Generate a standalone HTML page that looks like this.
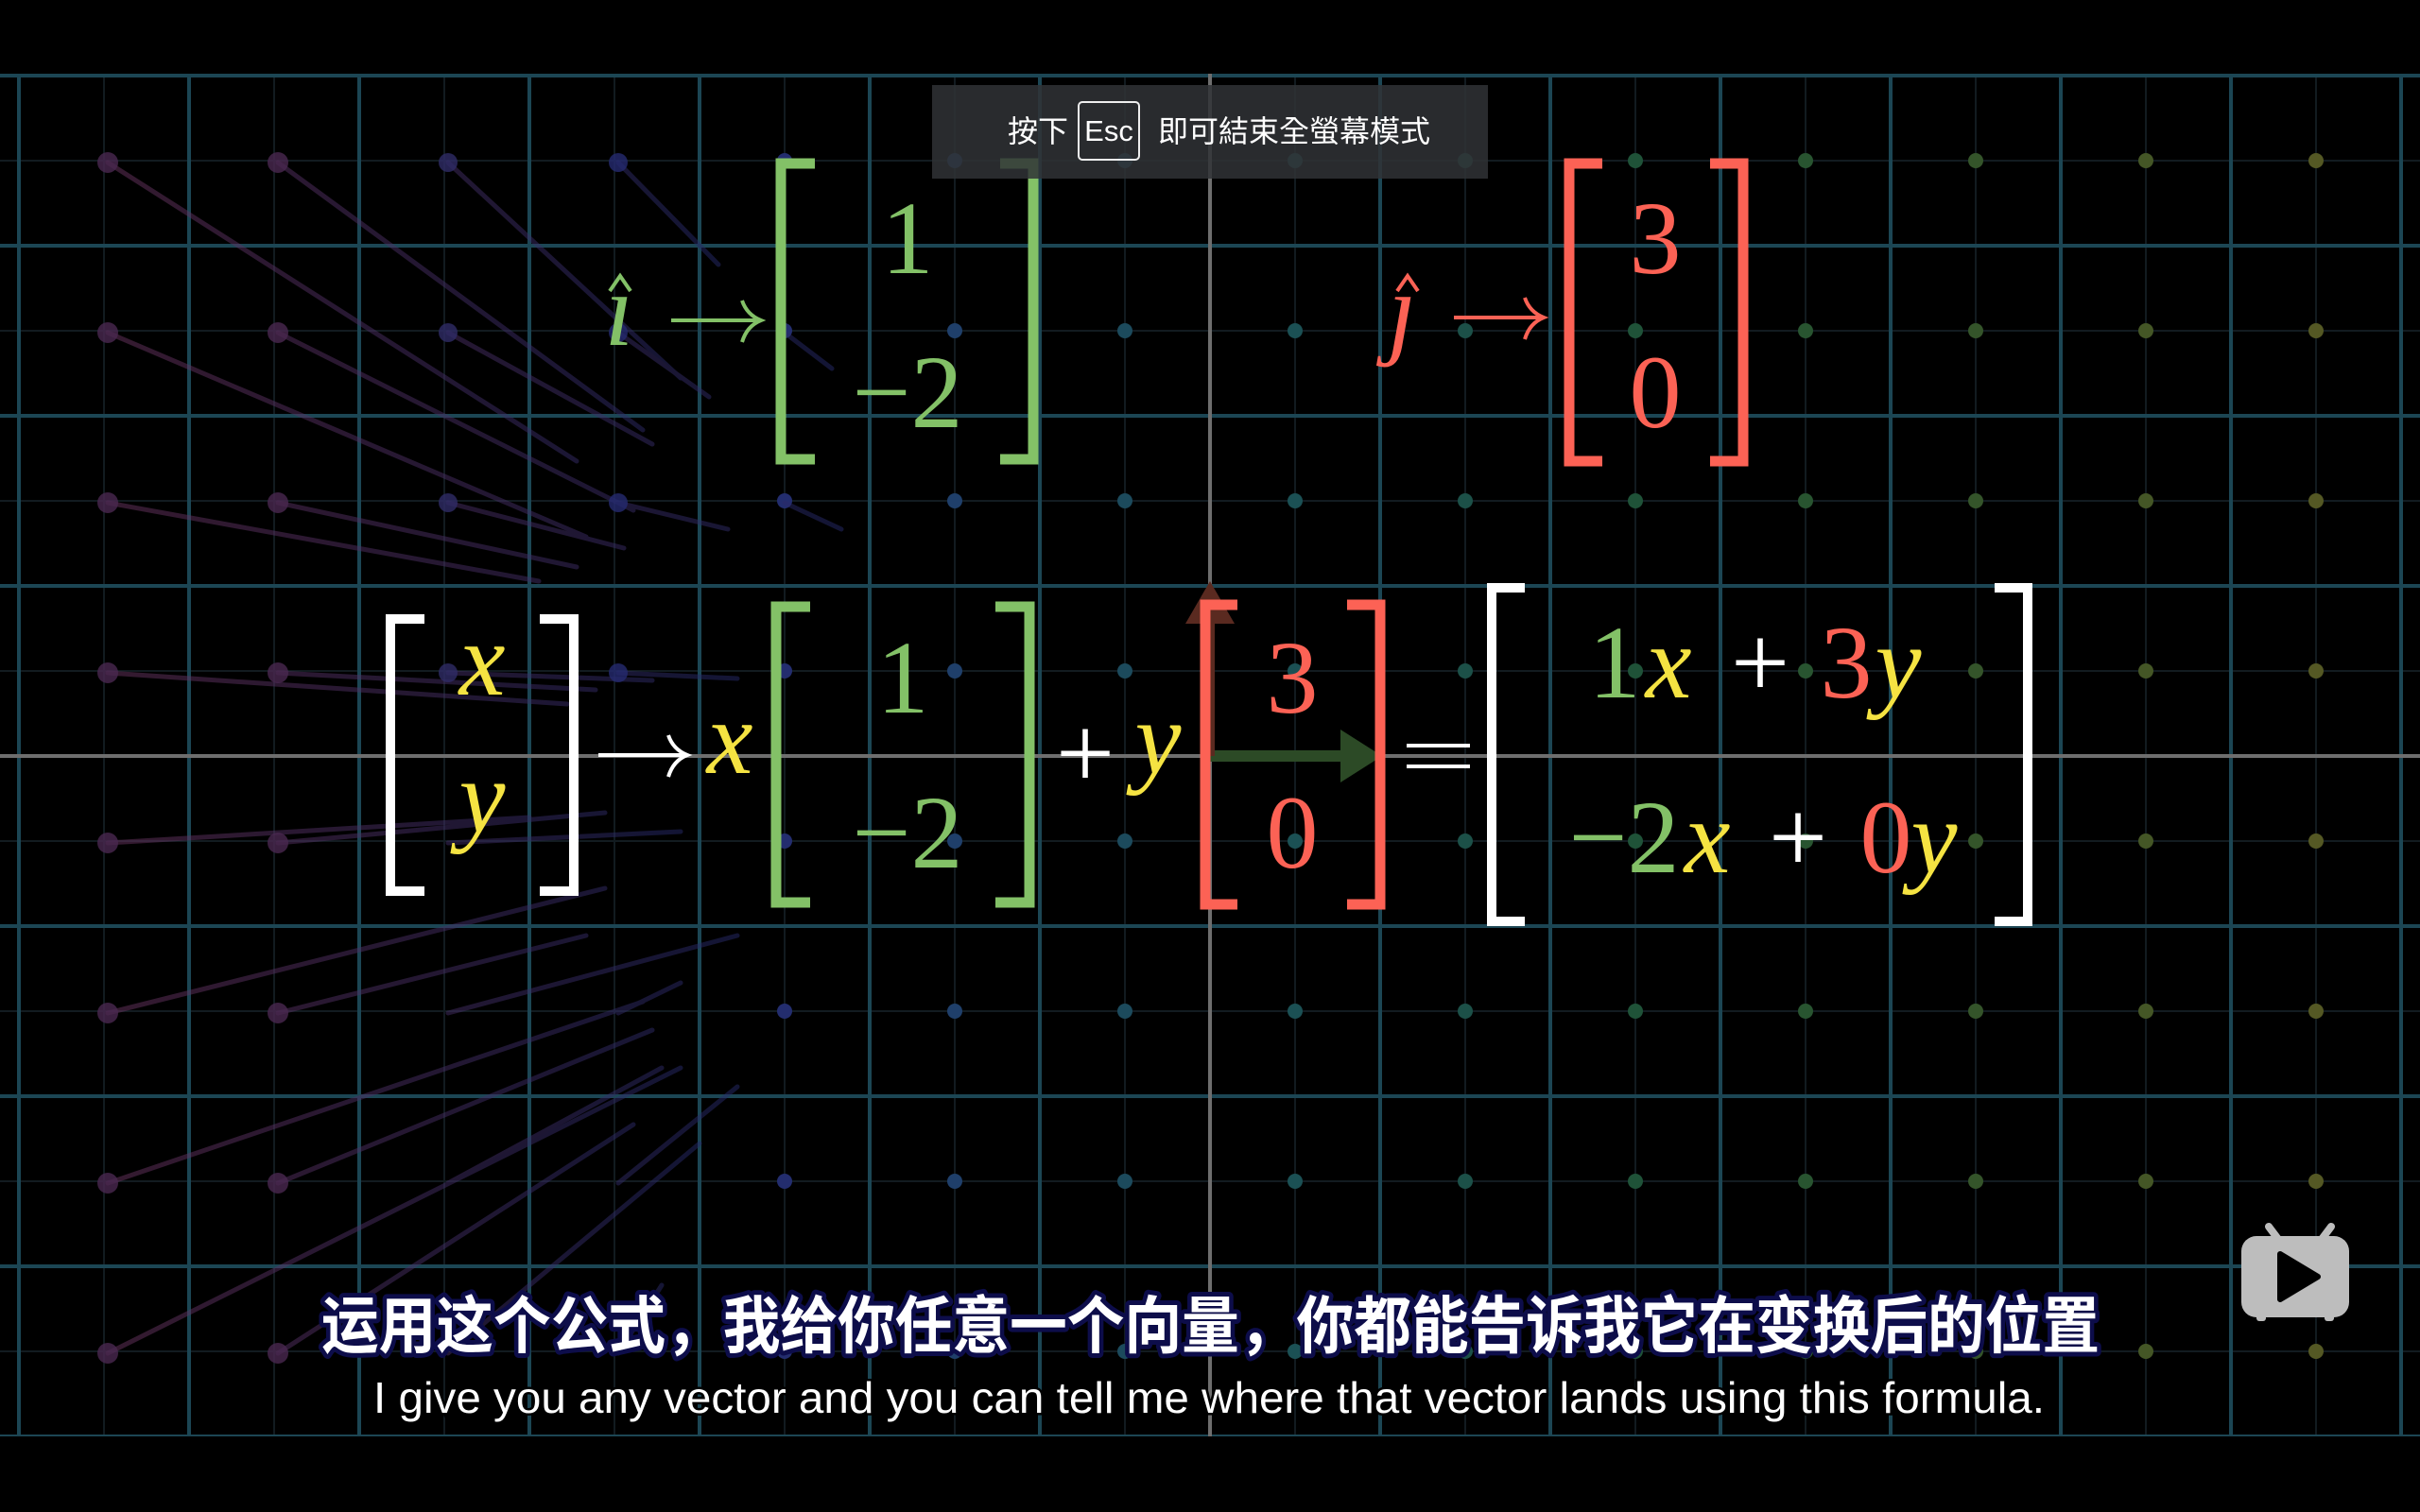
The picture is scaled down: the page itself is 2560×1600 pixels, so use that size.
<!DOCTYPE html>
<html><head><meta charset="utf-8"><style>
html,body{margin:0;padding:0;background:#000;width:2560px;height:1600px;overflow:hidden}
svg{position:absolute;left:0;top:0}
.esc{position:absolute;left:986px;top:90px;width:588px;height:99px;background:rgba(48,50,54,0.85);}
.esct{position:absolute;top:0;height:99px;line-height:99px;color:#fff;font-family:"Liberation Sans","Noto Sans CJK TC",sans-serif;font-size:32px;white-space:nowrap}
.key{position:absolute;left:154px;top:17px;width:66px;height:63px;border:2px solid #eee;border-radius:5px;box-sizing:border-box;color:#fff;font-family:"Liberation Sans",sans-serif;font-size:31px;line-height:60px;text-align:center}
</style></head><body>
<svg width="2560" height="1600" viewBox="0 0 2560 1600" xmlns="http://www.w3.org/2000/svg">
<defs>
<clipPath id="v"><rect x="0" y="78" width="2560" height="1442"/></clipPath>
<g id="row">
<circle cx="830" cy="0" r="8" fill="#232d6e"/>
<circle cx="1010" cy="0" r="8" fill="#1f3f6a"/>
<circle cx="1190" cy="0" r="8" fill="#1c4a5c"/>
<circle cx="1370" cy="0" r="8" fill="#1b5054"/>
<circle cx="1550" cy="0" r="8" fill="#1c5048"/>
<circle cx="1730" cy="0" r="8" fill="#1f5238"/>
<circle cx="1910" cy="0" r="8" fill="#285430"/>
<circle cx="2090" cy="0" r="8" fill="#34542a"/>
<circle cx="2270" cy="0" r="8" fill="#445626"/>
<circle cx="2450" cy="0" r="8" fill="#545824"/>
</g>
<linearGradient id="pg" x1="0" x2="1" y1="0" y2="0"><stop offset="0" stop-color="#6a3460"/><stop offset="1" stop-color="#262a6a"/></linearGradient>
</defs>
<g clip-path="url(#v)">
<g stroke="#121b20" stroke-width="2">
<path d="M110 78V1520M290 78V1520M470 78V1520M650 78V1520M830 78V1520M1010 78V1520M1190 78V1520M1370 78V1520M1550 78V1520M1730 78V1520M1910 78V1520M2090 78V1520M2270 78V1520M2450 78V1520"/>
<path d="M0 170H2560M0 350H2560M0 530H2560M0 710H2560M0 890H2560M0 1070H2560M0 1250H2560M0 1430H2560"/>
</g>
<g stroke="#1c4654" stroke-width="4">
<path d="M20 78V1520M200 78V1520M380 78V1520M560 78V1520M740 78V1520M920 78V1520M1100 78V1520M1460 78V1520M1640 78V1520M1820 78V1520M2000 78V1520M2180 78V1520M2360 78V1520M2540 78V1520"/>
<path d="M0 80H2560M0 260H2560M0 440H2560M0 620H2560M0 980H2560M0 1160H2560M0 1340H2560M0 1520H2560"/>
</g>
<g stroke="#6e6e6e" stroke-width="4"><path d="M1280 78V1520M0 800H2560"/></g>
<use href="#row" y="170"/><use href="#row" y="350"/><use href="#row" y="530"/><use href="#row" y="710"/>
<use href="#row" y="890"/><use href="#row" y="1070"/><use href="#row" y="1250"/><use href="#row" y="1430"/>
<g stroke="url(#pg)" stroke-width="5" fill="none" opacity="0.5" stroke-linecap="round">
<path d="M114 172L610 488M294 172L680 455M474 172L720 400M654 172L760 280"/>
<path d="M114 352L620 568M294 352L670 540M474 352L690 470M654 352L750 420M830 352L880 390"/>
<path d="M114 532L570 615M294 532L610 600M474 532L660 580M654 532L770 560M830 532L890 560"/>
<path d="M114 712L600 745M294 712L630 730M474 712L690 720M654 712L780 718"/>
<path d="M114 892L560 865M294 892L640 860M474 892L720 880"/>
<path d="M114 1072L640 940M294 1072L620 990M474 1072L780 990M654 1072L720 1040"/>
<path d="M114 1252L680 1060M294 1252L690 1090M474 1252L700 1130M654 1252L780 1150"/>
<path d="M114 1432L720 1130M294 1432L670 1190M474 1432L740 1210M654 1432L700 1360"/>
</g>
<g fill="#4a2850" opacity="0.8">
<circle cx="114" cy="172" r="11"/><circle cx="294" cy="172" r="11"/><circle cx="474" cy="172" r="10" fill="#302c66"/><circle cx="654" cy="172" r="10" fill="#262a70"/>
<circle cx="114" cy="352" r="11"/><circle cx="294" cy="352" r="11"/><circle cx="474" cy="352" r="10" fill="#302c66"/><circle cx="654" cy="352" r="10" fill="#262a70"/>
<circle cx="114" cy="532" r="11"/><circle cx="294" cy="532" r="11"/><circle cx="474" cy="532" r="10" fill="#302c66"/><circle cx="654" cy="532" r="10" fill="#262a70"/>
<circle cx="114" cy="712" r="11"/><circle cx="294" cy="712" r="11"/><circle cx="474" cy="712" r="10" fill="#302c66"/><circle cx="654" cy="712" r="10" fill="#262a70"/>
<circle cx="114" cy="892" r="11"/><circle cx="294" cy="892" r="11"/>
<circle cx="114" cy="1072" r="11"/><circle cx="294" cy="1072" r="11"/>
<circle cx="114" cy="1252" r="11"/><circle cx="294" cy="1252" r="11"/>
<circle cx="114" cy="1432" r="11"/><circle cx="294" cy="1432" r="11"/>
</g>
<path d="M1280 800H1425" stroke="#2c4a26" stroke-width="12"/>
<path d="M1418 772L1462 800L1418 828Z" fill="#2c4a26"/>
<path d="M1280 800V640" stroke="#5a2a20" stroke-width="10"/>
<path d="M1254 660L1280 615L1306 660Z" fill="#5a2a20"/>
</g>

<g font-family="Liberation Serif, serif" font-size="110" text-anchor="middle">
<text x="655" y="365" fill="#83c167" font-style="italic">ı</text>
<path d="M645 308L656 292L667 308" stroke="#83c167" stroke-width="4" fill="none"/>
<path d="M710 339H800M785 318Q790 333 805 339Q790 345 785 362" stroke="#83c167" stroke-width="4" fill="none"/>
<path d="M862 173H826V486H862M1058 173H1093V486H1058" stroke="#83c167" stroke-width="11" fill="none"/>
<text x="960" y="289" fill="#83c167">1</text>
<text x="960" y="452" fill="#83c167">−2</text>
<text x="1483" y="365" fill="#fc6255" font-style="italic">ȷ</text>
<path d="M1478 308L1489 292L1500 308" stroke="#fc6255" stroke-width="4" fill="none"/>
<path d="M1538 336H1628M1613 315Q1618 330 1633 336Q1618 342 1613 359" stroke="#fc6255" stroke-width="4" fill="none"/>
<path d="M1695 173H1660V488H1695M1809 173H1844V488H1809" stroke="#fc6255" stroke-width="11" fill="none"/>
<text x="1751" y="289" fill="#fc6255">3</text>
<text x="1751" y="452" fill="#fc6255">0</text>

<path d="M449 655H413V943H449M571 655H607V943H571" stroke="#fff" stroke-width="10" fill="none"/>
<text x="510" y="735" fill="#f5e342" font-style="italic">x</text>
<text x="510" y="880" fill="#f5e342" font-style="italic">y</text>
<path d="M633 799H722M707 778Q712 793 727 799Q712 805 707 822" stroke="#fff" stroke-width="4" fill="none"/>
<text x="772" y="818" fill="#f5e342" font-style="italic">x</text>
<path d="M857 642H821V955H857M1053 642H1089V955H1053" stroke="#83c167" stroke-width="11" fill="none"/>
<text x="955" y="754" fill="#83c167">1</text>
<text x="960" y="918" fill="#83c167">−2</text>
<text x="1148" y="834" fill="#fff">+</text>
<text x="1225" y="818" fill="#f5e342" font-style="italic">y</text>
<path d="M1309 640H1275V957H1309M1425 640H1460V957H1425" stroke="#fc6255" stroke-width="11" fill="none"/>
<text x="1367" y="754" fill="#fc6255">3</text>
<text x="1367" y="918" fill="#fc6255">0</text>
<path d="M1488 789H1555M1488 811H1555" stroke="#fff" stroke-width="4"/>
<path d="M1613 622H1578V975H1613M2110 622H2145V975H2110" stroke="#fff" stroke-width="10" fill="none"/>
<text x="1708" y="738" fill="#83c167">1</text>
<text x="1765" y="738" fill="#f5e342" font-style="italic">x</text>
<text x="1862" y="738" fill="#fff">+</text>
<text x="1953" y="738" fill="#fc6255">3</text>
<text x="2008" y="738" fill="#f5e342" font-style="italic">y</text>
<text x="1718" y="923" fill="#83c167">−2</text>
<text x="1806" y="923" fill="#f5e342" font-style="italic">x</text>
<text x="1902" y="923" fill="#fff">+</text>
<text x="1995" y="923" fill="#fc6255">0</text>
<text x="2046" y="923" fill="#f5e342" font-style="italic">y</text>
</g>

<text x="340" y="1426" font-family="Liberation Sans, Noto Sans CJK SC, sans-serif" font-weight="bold" font-size="66" textLength="1881" lengthAdjust="spacingAndGlyphs" fill="#fff" stroke="#0d0d4a" stroke-width="10" paint-order="stroke" stroke-linejoin="round">运用这个公式，我给你任意一个向量，你都能告诉我它在变换后的位置</text>
<text x="395" y="1495" font-family="Liberation Sans, sans-serif" font-size="46" textLength="1768" lengthAdjust="spacingAndGlyphs" fill="#fff" stroke="#000" stroke-width="5" paint-order="stroke">I give you any vector and you can tell me where that vector lands using this formula.</text>

<g>
<path d="M2400 1298L2418 1322M2466 1298L2448 1322" stroke="#bdbdbd" stroke-width="8" stroke-linecap="round"/>
<rect x="2371" y="1308" width="114" height="86" rx="16" fill="#bdbdbd"/>
<rect x="2387" y="1390" width="10" height="8" rx="3" fill="#bdbdbd"/><rect x="2459" y="1390" width="10" height="8" rx="3" fill="#bdbdbd"/>
<path d="M2412 1327L2452 1351L2412 1375Z" fill="#000" stroke="#000" stroke-width="6" stroke-linejoin="round"/>
</g>
</svg>
<div class="esc">
<div class="esct" style="left:80px">按下</div>
<div class="key">Esc</div>
<div class="esct" style="left:239px">即可結束全螢幕模式</div>
</div>
</body></html>
